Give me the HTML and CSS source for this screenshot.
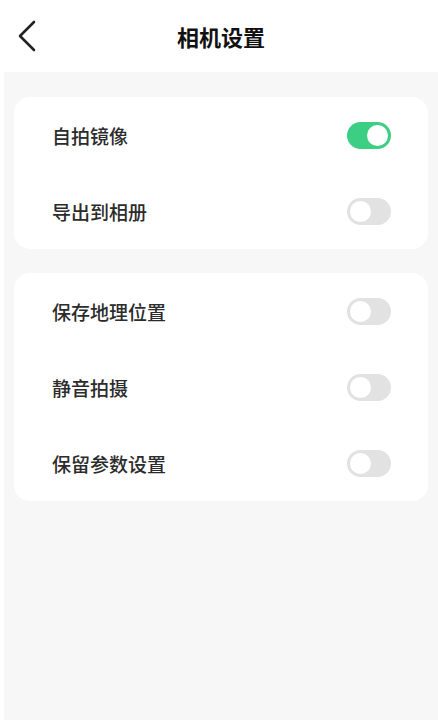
FILE: index.html
```html
<!doctype html>
<html lang="zh-CN">

<head>
    <meta charset="utf-8">
    <title>相机设置</title>
    <link rel="stylesheet" href="styles.css">
</head>

<body>
    <div class="kopf">
        <svg class="zurueck" width="22" height="34" viewBox="0 0 22 34">
            <polyline points="18,3 4,17 18,31" fill="none" stroke="#222" stroke-width="2.6" stroke-linecap="round" stroke-linejoin="round" />
        </svg>
        <div class="titel">相机设置</div>
    </div>

    <div class="inhalt">
        <div class="karte">
            <div class="zeile"><span>自拍镜像</span><span class="schalter an"></span></div>
            <div class="zeile"><span>导出到相册</span><span class="schalter"></span></div>
        </div>

        <div class="karte">
            <div class="zeile"><span>保存地理位置</span><span class="schalter"></span></div>
            <div class="zeile"><span>静音拍摄</span><span class="schalter"></span></div>
            <div class="zeile"><span>保留参数设置</span><span class="schalter"></span></div>
        </div>
    </div>
</body>

</html>
```

FILE: styles.css
```css
html,
body {
    margin: 0;
    height: 100%;
}

body {
    font-family: "Noto Sans CJK SC", "Noto Sans", sans-serif;
    color: #2c2c2c;
    background-color: #fff;
    display: flex;
    flex-direction: column;
}

.kopf {
    height: 72px;
    position: relative;
    display: flex;
    align-items: center;
    justify-content: center;
    background-color: #fff;
}

.zurueck {
    position: absolute;
    left: 16px;
    top: 19px;
}

.titel {
    font-size: 22px;
    font-weight: bold;
    color: #111;
    margin-top: -1px;
    margin-left: 4px;
}

.inhalt {
    flex: 1;
    margin-left: 4px;
    padding: 25px 10px;
    background-color: #f7f7f7;
    display: flex;
    flex-direction: column;
    gap: 24px;
}

.karte {
    background-color: #fff;
    border-radius: 16px;
    padding: 0 37px 0 38px;
}

.zeile {
    height: 76px;
    display: flex;
    align-items: center;
    justify-content: space-between;
    font-size: 19px;
    font-weight: 500;
}

.schalter {
    width: 44px;
    height: 27px;
    border-radius: 14px;
    background-color: #e2e2e2;
    position: relative;
}

.schalter::after {
    content: "";
    position: absolute;
    left: 3px;
    top: 3px;
    width: 21px;
    height: 21px;
    border-radius: 50%;
    background-color: #fff;
}

.schalter.an {
    background-color: #3ccf84;
}

.schalter.an::after {
    left: 20px;
}
```
